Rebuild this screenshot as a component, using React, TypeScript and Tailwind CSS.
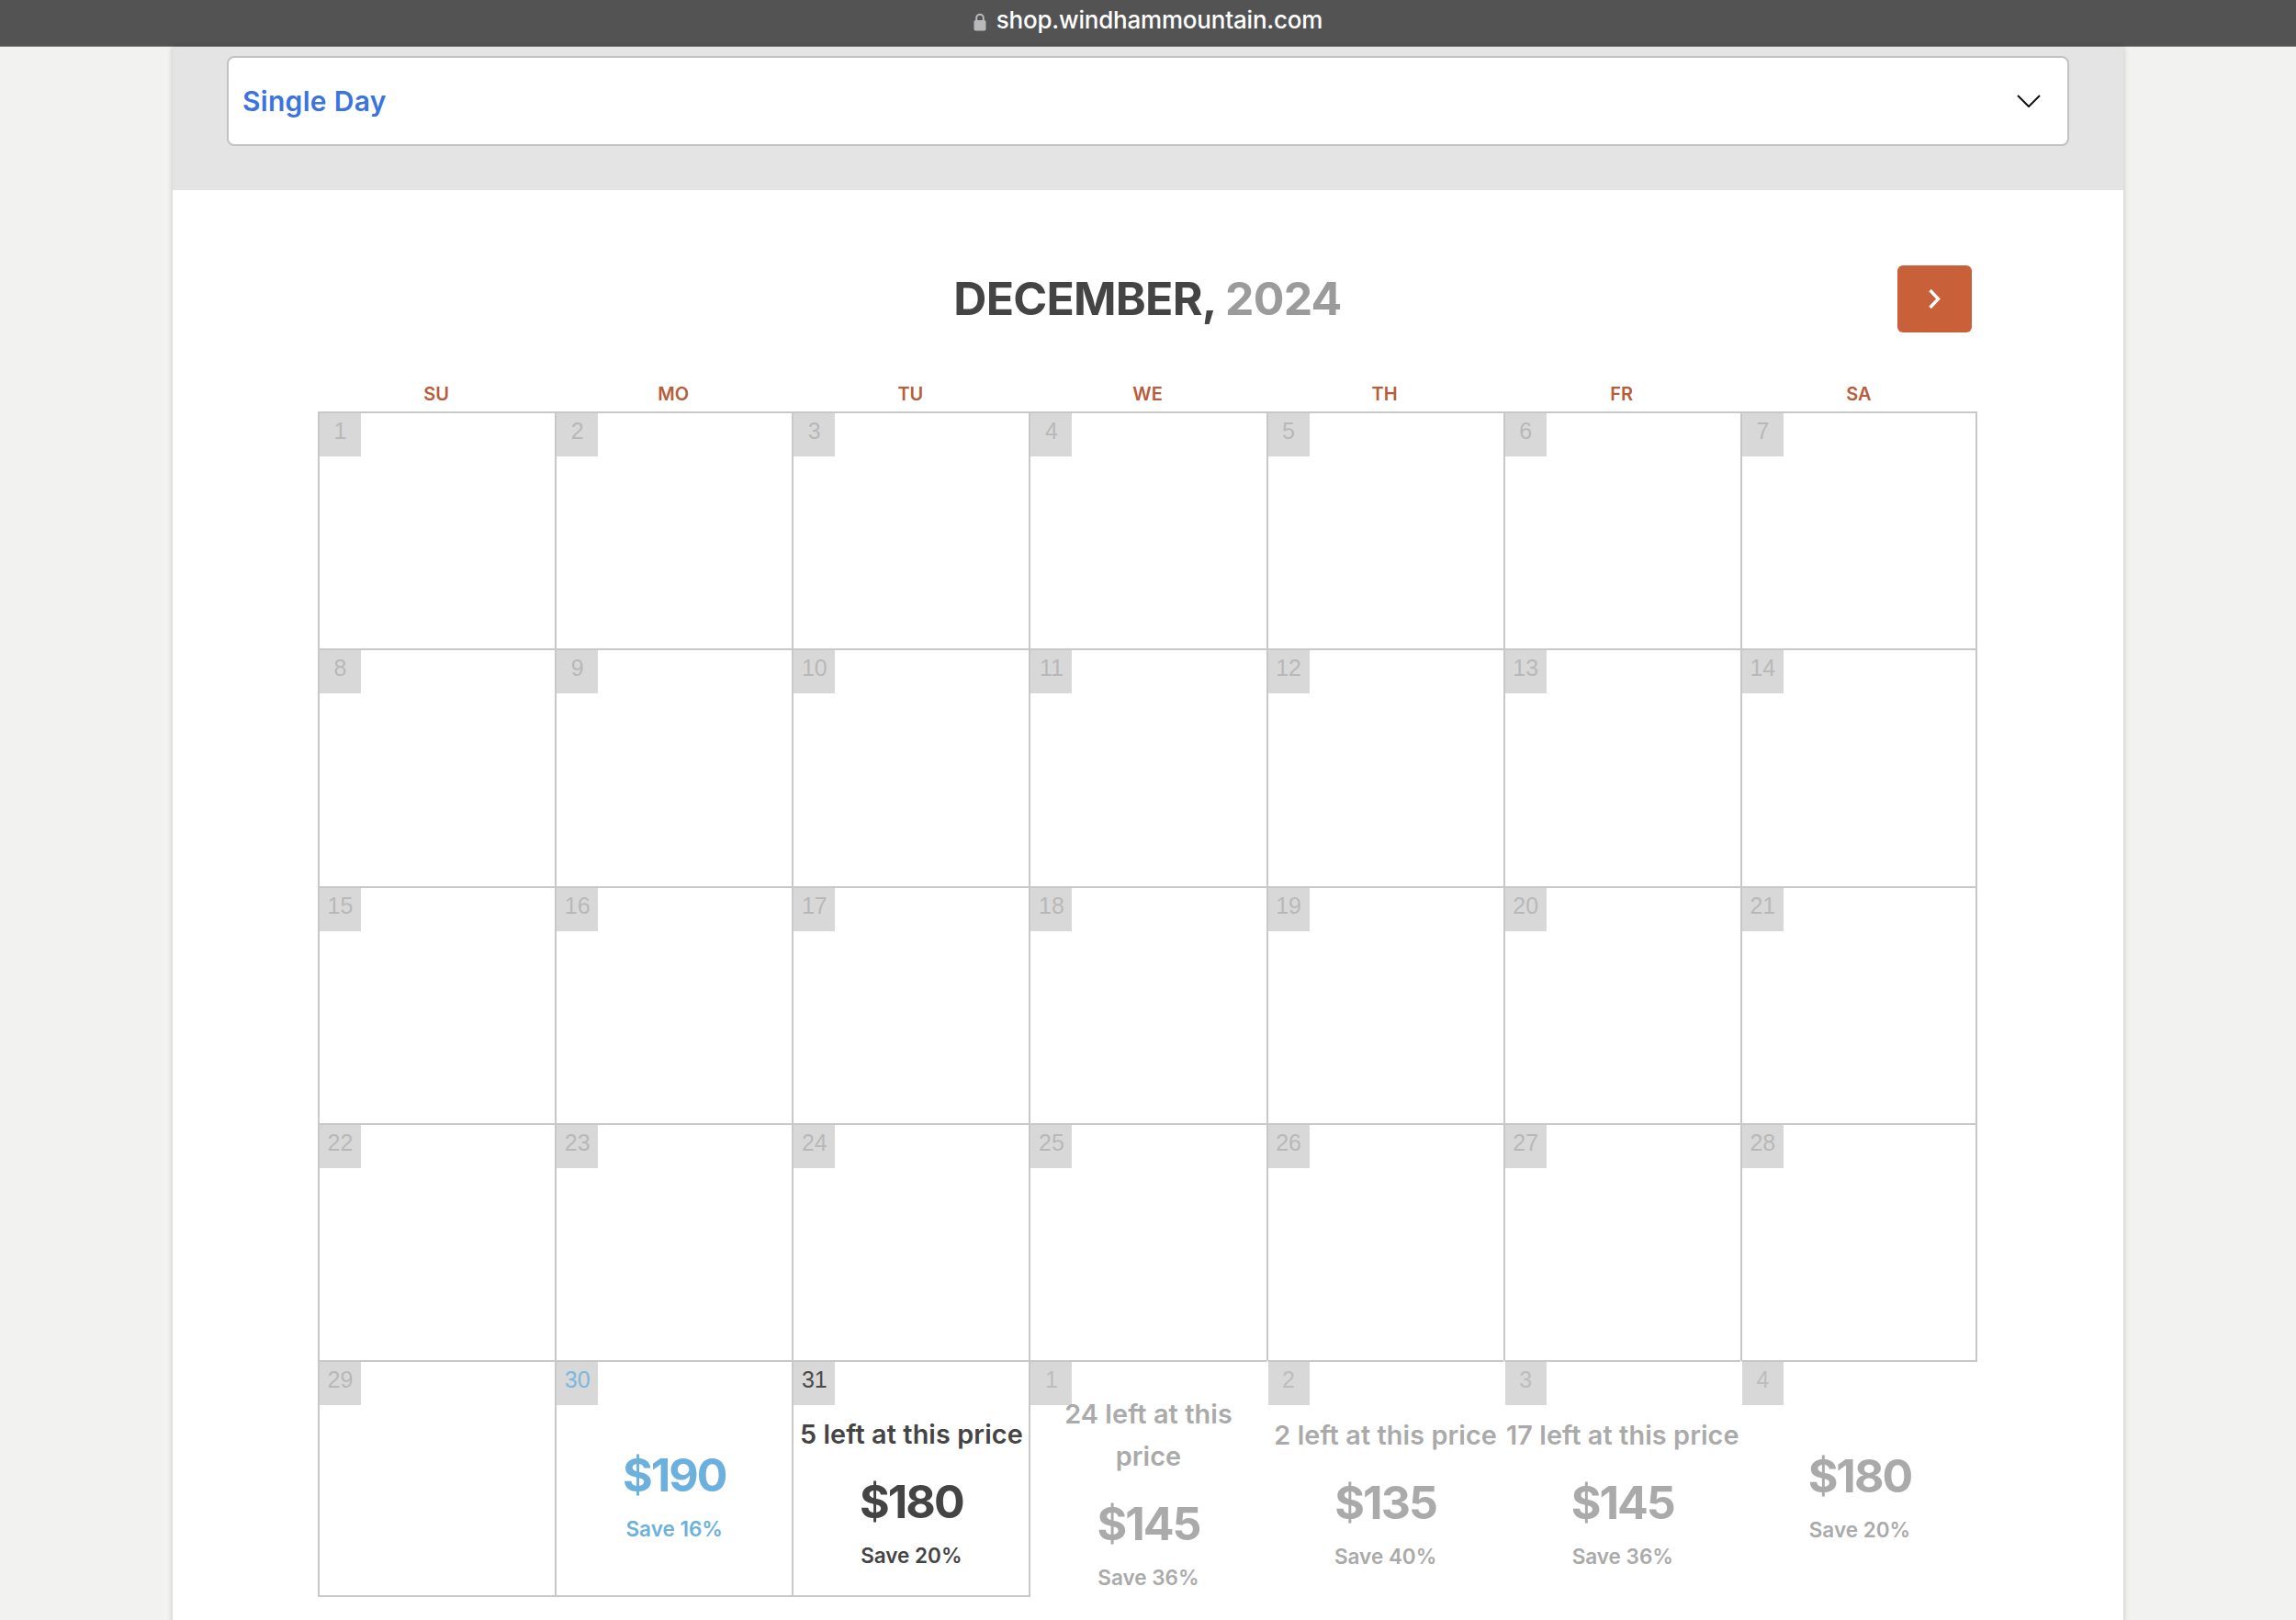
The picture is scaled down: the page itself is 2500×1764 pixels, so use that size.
const days = ["SU", "MO", "TU", "WE", "TH", "FR", "SA"];

type Last = {
  n: number;
  color: string;
  numColor: string;
  left?: string;
  price?: string;
  save?: string;
  outline: boolean;
  leftBorder: boolean;
};

const lastRow: Last[] = [
  { n: 29, color: "text-[#aaaaaa]", numColor: "text-[#b8b8b8]", outline: true, leftBorder: true },
  { n: 30, color: "text-[#6cb1de]", numColor: "text-[#7db7df]", price: "$190", save: "Save 16%", outline: true, leftBorder: true },
  { n: 31, color: "text-[#444444]", numColor: "text-[#4a4a4a]", left: "5 left at this price", price: "$180", save: "Save 20%", outline: true, leftBorder: true },
  { n: 1, color: "text-[#aaaaaa]", numColor: "text-[#bdbdbd]", left: "24 left at this price", price: "$145", save: "Save 36%", outline: false, leftBorder: true },
  { n: 2, color: "text-[#aaaaaa]", numColor: "text-[#bdbdbd]", left: "2 left at this price", price: "$135", save: "Save 40%", outline: false, leftBorder: false },
  { n: 3, color: "text-[#aaaaaa]", numColor: "text-[#bdbdbd]", left: "17 left at this price", price: "$145", save: "Save 36%", outline: false, leftBorder: false },
  { n: 4, color: "text-[#aaaaaa]", numColor: "text-[#bdbdbd]", price: "$180", save: "Save 20%", outline: false, leftBorder: false },
];

function Badge({ n, color }: { n: number; color: string }) {
  return (
    <div className={`w-[45px] h-[47px] shrink-0 bg-[#d8d8d8] flex justify-center pt-[4px] text-[25px] leading-[30px] font-['Liberation_Sans',sans-serif] ${color}`}>
      {n}
    </div>
  );
}

export default function App() {
  const weeks = [0, 1, 2, 3];
  return (
    <div className="h-[1764px] overflow-hidden bg-[#f2f2f0] font-['Inter',sans-serif]">
      <div className="h-[51px] bg-[#535353] flex items-center justify-center gap-[11px] border-b border-[#808080]">
        <svg width="14" height="20" viewBox="0 0 14 20" className="mt-[-3px]">
          <path d="M3.2 9V5.5a3.8 3.8 0 0 1 7.6 0V9" fill="none" stroke="#b9b9bb" strokeWidth="2" />
          <rect x="0.5" y="8" width="13" height="11.5" rx="1.8" fill="#b9b9bb" />
        </svg>
        <span className="text-white text-[26px] leading-[40px] font-medium tracking-[-0.2px] mt-[-6px]">shop.windhammountain.com</span>
      </div>
      <div className="w-[2124px] mx-auto bg-white shadow-[0_0_6px_rgba(0,0,0,0.2)] pb-[100px]">
        <div className="h-[156px] bg-[#e4e4e4] px-[59px] pt-[10px]">
          <div className="h-[98px] bg-white border-2 border-[#c2c2c2] rounded-[8px] flex items-center justify-between pl-[15px] pr-[29px]">
            <span className="text-[#3a74dc] text-[30px] font-semibold tracking-[0.3px]">Single Day</span>
            <svg width="26" height="14" viewBox="0 0 26 14">
              <path d="M1 1l12 12L25 1" fill="none" stroke="#111111" strokeWidth="2" />
            </svg>
          </div>
        </div>
        <div className="pl-[158px] pr-[159px] pt-[81px]">
          <div className="grid grid-cols-[1fr_auto_1fr] items-center h-[73px] px-[6px]">
            <div />
            <h1 className="text-[50px] font-bold text-[#444444] tracking-[-0.8px]">
              DECEMBER, <span className="text-[#9b9b9b]">2024</span>
            </h1>
            <button className="justify-self-end w-[81px] h-[73px] bg-[#c8603a] rounded-[6px] flex items-center justify-center">
              <svg width="15" height="23" viewBox="0 0 15 23">
                <path d="M2.5 2l9 9.5-9 9.5" fill="none" stroke="#ffffff" strokeWidth="3.4" />
              </svg>
            </button>
          </div>
          <div className="grid grid-cols-7 mt-[53px] mb-[4px]">
            {days.map((d) => (
              <div key={d} className="text-center text-[#b85c3c] text-[20px] leading-[30px] font-semibold">{d}</div>
            ))}
          </div>
          <div className="grid grid-cols-7 auto-rows-[258.3px]">
            {weeks.flatMap((w) =>
              days.map((_, i) => {
                const n = w * 7 + i + 1;
                return (
                  <div key={n} className={`border-t-2 border-l-2 border-[#c8c8c8] ${i === 6 ? "border-r-2" : ""}`}>
                    <Badge n={n} color="text-[#b8b8b8]" />
                  </div>
                );
              })
            )}
            {lastRow.map((c) => (
              <div
                key={c.n + c.numColor + c.left}
                className={`border-t-2 border-[#c8c8c8] flex flex-col ${c.outline ? "border-b-2" : ""} ${c.leftBorder ? "border-l-2" : "border-l-2 border-l-transparent"} min-h-0`}
              >
                <Badge n={c.n} color={c.numColor} />
                {c.price && (
                  <div className={`flex-1 min-h-0 flex flex-col items-center justify-center text-center pb-[18px] ${c.color}`}>
                    {c.left && <div className="text-[28.8px] leading-[46px] font-semibold tracking-[0.1px] mb-[11px]">{c.left}</div>}
                    <div className="text-[50px] leading-[78px] font-bold tracking-[-2px]">{c.price}</div>
                    <div className="text-[22.5px] leading-[34px] font-semibold mt-[3px]">{c.save}</div>
                  </div>
                )}
              </div>
            ))}
          </div>
        </div>
      </div>
    </div>
  );
}
